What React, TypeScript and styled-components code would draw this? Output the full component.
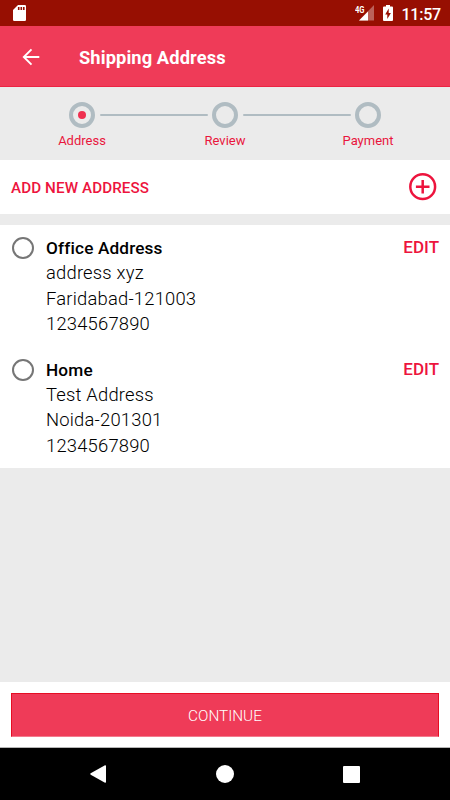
import React from "react";
import styled, { createGlobalStyle } from "styled-components";

const Global = createGlobalStyle`
  *, *::before, *::after { box-sizing: border-box; }
  body { margin: 0; background: #ebebeb; font-family: Roboto, sans-serif; }
  button { font: inherit; border: 0; padding: 0; background: none; color: inherit; }
`;

const Screen = styled.div`
  width: 450px;
  height: 800px;
  display: flex;
  flex-direction: column;
  overflow: hidden;
  background: #ebebeb;
`;

const StatusBar = styled.div`
  height: 26px;
  flex: none;
  display: flex;
  align-items: center;
  padding: 0 9px 0 13px;
  background: #970f02;
  color: #fff;
`;

const StatusIcons = styled.div`
  margin-left: auto;
  display: flex;
  align-items: center;
`;

const Clock = styled.span`
  margin-left: 8px;
  padding-top: 3px;
  font-size: 16px;
  line-height: 20px;
  font-weight: 500;
  letter-spacing: -0.2px;
`;

const BatteryIcon = styled.svg`
  margin-left: 8px;
`;

const AppBar = styled.header`
  height: 61px;
  flex: none;
  display: flex;
  align-items: center;
  padding: 1px 0 0 22px;
  background: #ef3b58;
  border-bottom: 1px solid #ec2443;
  color: #fff;
`;

const Title = styled.h1`
  margin: 2px 0 0 39px;
  font-size: 18.3px;
  line-height: 24px;
  font-weight: 700;
  letter-spacing: 0.1px;
`;

const Stepper = styled.div`
  height: 73px;
  flex: none;
  display: flex;
  justify-content: center;
  padding-top: 15px;
`;

const Step = styled.div`
  width: 60px;
  display: flex;
  flex-direction: column;
  align-items: center;
`;

const StepCircle = styled.div`
  width: 26px;
  height: 26px;
  display: flex;
  align-items: center;
  justify-content: center;
  border: 4px solid #b0bcc2;
  border-radius: 50%;
`;

const StepDot = styled.div`
  width: 8px;
  height: 8px;
  border-radius: 50%;
  background: #ef3050;
`;

const StepLabel = styled.span`
  margin-top: 5px;
  font-size: 13px;
  line-height: 16px;
  color: #e9163d;
`;

const StepLine = styled.div`
  width: 108px;
  height: 2px;
  margin: 12px -12.5px 0;
  border-radius: 1px;
  background: #b0bcc2;
`;

const AddRow = styled.section`
  height: 54px;
  flex: none;
  display: flex;
  align-items: center;
  justify-content: space-between;
  padding: 0 13px 0 11px;
  margin-bottom: 11px;
  background: #fff;
  color: #ed143d;
  font-size: 15.2px;
  font-weight: 500;
`;

const AddLabel = styled.span`
  padding-top: 2px;
  letter-spacing: 0.1px;
`;

const AddressList = styled.section`
  height: 243px;
  flex: none;
  padding-top: 10px;
  background: #fff;
`;

const AddressItem = styled.article`
  height: 121.6px;
  display: flex;
  align-items: flex-start;
  padding: 0 11px 0 12px;
`;

const Radio = styled.span`
  width: 22px;
  height: 22px;
  margin: 2px 12px 0 0;
  border: 2px solid #767676;
  border-radius: 50%;
`;

const Details = styled.div`
  flex: 1;
  font-size: 18.4px;
  line-height: 25.4px;
  font-weight: 300;
  letter-spacing: 0.2px;
  color: #000;
`;

const Name = styled.div`
  padding-top: 1px;
  margin-bottom: -1px;
  font-size: 17.2px;
  font-weight: 500;
  letter-spacing: 0.16px;
`;

const Edit = styled.button`
  color: #ed143d;
  font-size: 17px;
  line-height: 25px;
  font-weight: 500;
`;

const Footer = styled.footer`
  height: 66px;
  flex: none;
  margin-top: auto;
  padding: 11px;
  background: #fff;
  border-bottom: 1px solid #b5b5b5;
`;

const Continue = styled.button`
  display: block;
  width: 100%;
  height: 44px;
  padding-top: 1px;
  background: #ef3b58;
  border: 1px solid #e60d24;
  border-bottom-color: #f37a8d;
  color: #fff;
  font-size: 15.3px;
  font-weight: 300;
`;

const NavBar = styled.nav`
  height: 52px;
  flex: none;
  display: grid;
  grid-template-columns: repeat(3, 126.5px);
  justify-content: center;
  align-items: center;
  justify-items: center;
  background: #000;
`;

const addresses = [
  { name: "Office Address", lines: ["address xyz", "Faridabad-121003", "1234567890"] },
  { name: "Home", lines: ["Test Address", "Noida-201301", "1234567890"] },
];

const SdCard = () => (
  <svg width="13" height="16" viewBox="0 0 13 16">
    <path fill="#fff" d="M5 0h6.800Q13 0 13 1.200v13.600q0 1.200-1.200 1.200H1.200Q0 16 0 14.800V5z" />
    <path stroke="#970f02" strokeWidth="1.600" d="M5.700 2v3M8.300 2v3M10.800 2v3" />
  </svg>
);

const Signal = () => (
  <svg width="20" height="18" viewBox="0 0 20 18">
    <path fill="#fff" fillOpacity=".35" d="M19 1v15.500H4z" />
    <path fill="#fff" d="M13 7.500v9H4z" />
    <text x="0" y="8.500" fill="#fff" fontSize="8.600" fontWeight="700" textLength="9.500" lengthAdjust="spacingAndGlyphs">4G</text>
  </svg>
);

const Battery = () => (
  <BatteryIcon width="10" height="16" viewBox="0 0 10 16">
    <path fill="#fff" d="M3 0h4v1.500h2q1 0 1 1V15q0 1-1 1H1q-1 0-1-1V2.500q0-1 1-1h2z" />
    <path fill="#970f02" d="M5.700 3.500 2.200 9.500h2.100V14l3.600-6H5.700z" />
  </BatteryIcon>
);

const Back = () => (
  <svg width="18" height="18" viewBox="0 0 18 18" fill="none" stroke="#fff" strokeWidth="1.900">
    <path d="M17.300 9H2M9.500 1.300 1.800 9l7.700 7.700" />
  </svg>
);

const Plus = () => (
  <svg width="28" height="28" viewBox="0 0 28 28" fill="none" stroke="#ed143d" strokeWidth="2.500">
    <circle cx="13.700" cy="13.700" r="12.400" />
    <path d="M6.900 13.700h13.600M13.700 6.900v13.600" />
  </svg>
);

export default function App() {
  return (
    <Screen>
      <Global />
      <StatusBar>
        <SdCard />
        <StatusIcons>
          <Signal />
          <Battery />
          <Clock>11:57</Clock>
        </StatusIcons>
      </StatusBar>
      <AppBar>
        <Back />
        <Title>Shipping Address</Title>
      </AppBar>
      <Stepper>
        <Step>
          <StepCircle><StepDot /></StepCircle>
          <StepLabel>Address</StepLabel>
        </Step>
        <StepLine />
        <Step>
          <StepCircle />
          <StepLabel>Review</StepLabel>
        </Step>
        <StepLine />
        <Step>
          <StepCircle />
          <StepLabel>Payment</StepLabel>
        </Step>
      </Stepper>
      <AddRow>
        <AddLabel>ADD NEW ADDRESS</AddLabel>
        <Plus />
      </AddRow>
      <AddressList>
        {addresses.map((a) => (
          <AddressItem key={a.name}>
            <Radio />
            <Details>
              <Name>{a.name}</Name>
              {a.lines.map((line) => <div key={line}>{line}</div>)}
            </Details>
            <Edit>EDIT</Edit>
          </AddressItem>
        ))}
      </AddressList>
      <Footer>
        <Continue>CONTINUE</Continue>
      </Footer>
      <NavBar>
        <svg width="18" height="18" viewBox="0 0 18 18"><path fill="#fff" d="M16 1v16q0 1-1 .8L.7 9.700Q-.2 9 .7 8.300L15 .2q1-.2 1 .8z" /></svg>
        <svg width="18" height="18" viewBox="0 0 18 18"><circle cx="9" cy="9" r="9" fill="#fff" /></svg>
        <svg width="17" height="17" viewBox="0 0 17 17"><rect width="17" height="17" rx="1" fill="#fff" /></svg>
      </NavBar>
    </Screen>
  );
}
